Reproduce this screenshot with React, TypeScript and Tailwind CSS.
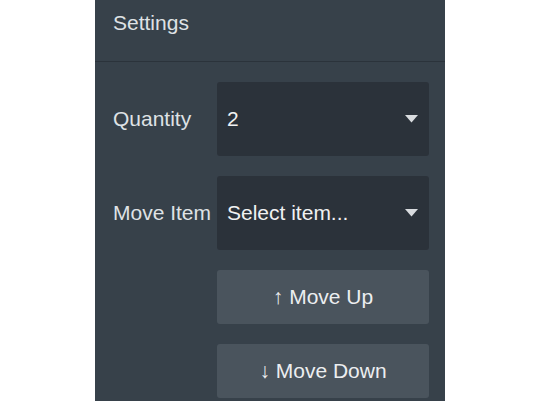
import { useState } from "react";

function Caret() {
  return (
    <svg width="13" height="8" viewBox="0 0 13 8" className="shrink-0">
      <path d="M0 0 H13 L6.5 7.5 Z" fill="#d9dcdf" />
    </svg>
  );
}

function SelectBox({ value }: { value: string }) {
  return (
    <div className="flex h-[74px] w-[212px] items-center justify-between rounded-[3px] bg-[#2b323a] pl-[10px] pr-[11px]">
      <span className="text-[21px] leading-[24px] text-[#f0f1f2]">{value}</span>
      <Caret />
    </div>
  );
}

export default function App() {
  const [qty] = useState("2");

  return (
    <div className="min-h-[401px] w-full bg-white" style={{ fontFamily: '"Liberation Sans", Arial, sans-serif' }}>
      <div className="ml-[95px] flex min-h-[401px] w-[350px] flex-col bg-[#37414a] text-[#dfe2e5]">
        <div className="h-[62px] border-b border-[#2b333b] pl-[18px] pt-[11px]">
          <h2 className="text-[21px] leading-[24px]">Settings</h2>
        </div>

        <div className="flex flex-col gap-[20px] pl-[18px] pt-[20px]">
          <div className="flex items-center">
            <label className="w-[104px] text-[21px] leading-[24px]">Quantity</label>
            <SelectBox value={qty} />
          </div>
          <div className="flex items-center">
            <label className="w-[104px] whitespace-nowrap text-[21px] leading-[24px]">Move Item</label>
            <SelectBox value="Select item..." />
          </div>
          <div className="ml-[104px] flex flex-col gap-[20px]">
            <button className="h-[54px] w-[212px] rounded-[3px] bg-[#4a545d] text-[21px] text-[#eceef0]">
              ↑ Move Up
            </button>
            <button className="h-[54px] w-[212px] rounded-[3px] bg-[#4a545d] text-[21px] text-[#eceef0]">
              ↓ Move Down
            </button>
          </div>
        </div>
      </div>
    </div>
  );
}
